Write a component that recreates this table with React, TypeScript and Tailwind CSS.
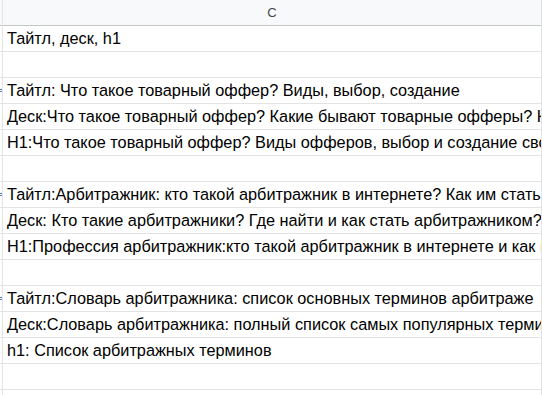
const rows: string[] = [
  "Тайтл, деск, h1",
  "",
  "Тайтл: Что такое товарный оффер? Виды, выбор, создание",
  "Деск:Что такое товарный оффер? Какие бывают товарные офферы? Как выбрать",
  "H1:Что такое товарный оффер? Виды офферов, выбор и создание своего оффера",
  "",
  "Тайтл:Арбитражник: кто такой арбитражник в интернете? Как им стать?",
  "Деск: Кто такие арбитражники? Где найти и как стать арбитражником? Разбираемся",
  "H1:Профессия арбитражник:кто такой арбитражник в интернете и как им стать",
  "",
  "Тайтл:Словарь арбитражника: список основных терминов арбитраже",
  "Деск:Словарь арбитражника: полный список самых популярных терминов",
  "h1: Список арбитражных терминов",
  "",
  "",
];

// rows whose column B neighbour shows a small blue overflow mark on the left edge
const marked = new Set([2, 6, 10]);

export default function App() {
  return (
    <div
      className="w-[542px] h-[395px] overflow-hidden bg-white flex"
      style={{ fontFamily: '"Liberation Sans", Arial, sans-serif' }}
    >
      <div className="w-[2px] shrink-0 flex flex-col">
        <div className="h-[26px] shrink-0 bg-[#f8f9fa] border-b border-[#c4c7c5]" />
        {rows.map((_, i) => (
          <div key={i} className="h-[26px] shrink-0 border-b border-[#e2e3e3] flex items-center">
            {marked.has(i) && <div className="w-[2px] h-[3px] border-y border-[#4a7fd1]" />}
          </div>
        ))}
      </div>
      <div className="w-[540px] shrink-0 flex flex-col border-l border-r border-[#e2e3e3]">
        <div className="h-[26px] shrink-0 bg-[#f8f9fa] border-b border-[#c4c7c5] flex items-center justify-center text-[13px] text-[#444746]">
          C
        </div>
        {rows.map((t, i) => (
          <div
            key={i}
            className="h-[26px] shrink-0 border-b border-[#e2e3e3] flex items-center pl-[4px] overflow-hidden whitespace-nowrap text-[16.3px] text-black"
          >
            {t}
          </div>
        ))}
      </div>
    </div>
  );
}
